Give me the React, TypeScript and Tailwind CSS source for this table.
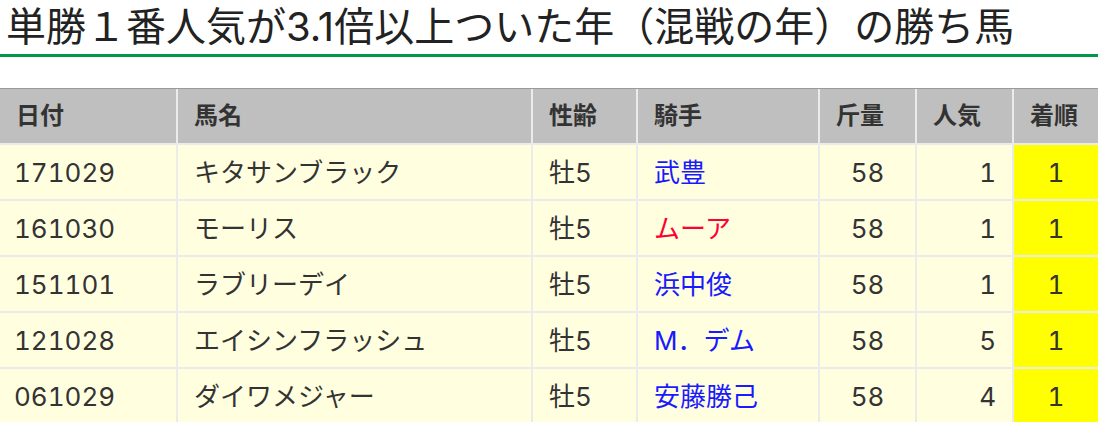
const rows = [
  { date: "171029", name: "キタサンブラック", sex: "牡5", jockey: "武豊", red: false, kg: "58", pop: "1", rank: "1" },
  { date: "161030", name: "モーリス", sex: "牡5", jockey: "ムーア", red: true, kg: "58", pop: "1", rank: "1" },
  { date: "151101", name: "ラブリーデイ", sex: "牡5", jockey: "浜中俊", red: false, kg: "58", pop: "1", rank: "1" },
  { date: "121028", name: "エイシンフラッシュ", sex: "牡5", jockey: "M．デム", red: false, kg: "58", pop: "5", rank: "1" },
  { date: "061029", name: "ダイワメジャー", sex: "牡5", jockey: "安藤勝己", red: false, kg: "58", pop: "4", rank: "1" },
];

const headers = ["日付", "馬名", "性齢", "騎手", "斤量", "人気", "着順"];

// 数字はInterの等幅数字の方が参照の字幅に近い
const cell = "h-[56px] bg-[#ffffe0] border-b-2 border-[#ebebeb] flex items-center";

export default function App() {
  return (
    <div
      className="w-[1098px] h-[422px] overflow-hidden bg-white text-[#333] tabular-nums"
      style={{ fontFamily: 'Inter, "Noto Sans CJK JP", sans-serif' }}
    >
      <div className="h-[57px] pl-[6px] flex items-center border-b-[3px] border-[#00994a]">
        <h1 className="text-[40px] leading-none font-normal text-[#222] normal-nums">
          単勝１番人気が3.1倍以上ついた年（混戦の年）の勝ち馬
        </h1>
      </div>

      <div className="mt-[31px] border-t border-[#9a9a9a] grid grid-cols-[178px_355px_105px_182px_97px_97px_84px]">
        {headers.map((h, i) => (
          <div
            key={h}
            className={`h-[56px] bg-[#bfbfbf] border-b-2 border-[#ebebeb] flex items-center pl-4 text-[24px] font-bold ${
              i < 6 ? "border-r-2" : ""
            }`}
          >
            {h}
          </div>
        ))}
        {rows.map((r) => (
          <div key={r.date} className="contents text-[26px]">
            <div className={`${cell} border-r-2 pl-[14px]`}>{r.date}</div>
            <div className={`${cell} border-r-2 pl-4`}>{r.name}</div>
            <div className={`${cell} border-r-2 pl-4`}>{r.sex}</div>
            <div
              className={`${cell} border-r-2 pl-4 ${
                r.red ? "text-[#ff0033]" : "text-[#1a1aff]"
              }`}
            >
              {r.jockey}
            </div>
            <div className={`${cell} border-r-2 justify-center`}>{r.kg}</div>
            <div className={`${cell} border-r-2 justify-end pr-4`}>{r.pop}</div>
            <div className={`${cell} !bg-[#ffff00] justify-center`}>{r.rank}</div>
          </div>
        ))}
      </div>
    </div>
  );
}
